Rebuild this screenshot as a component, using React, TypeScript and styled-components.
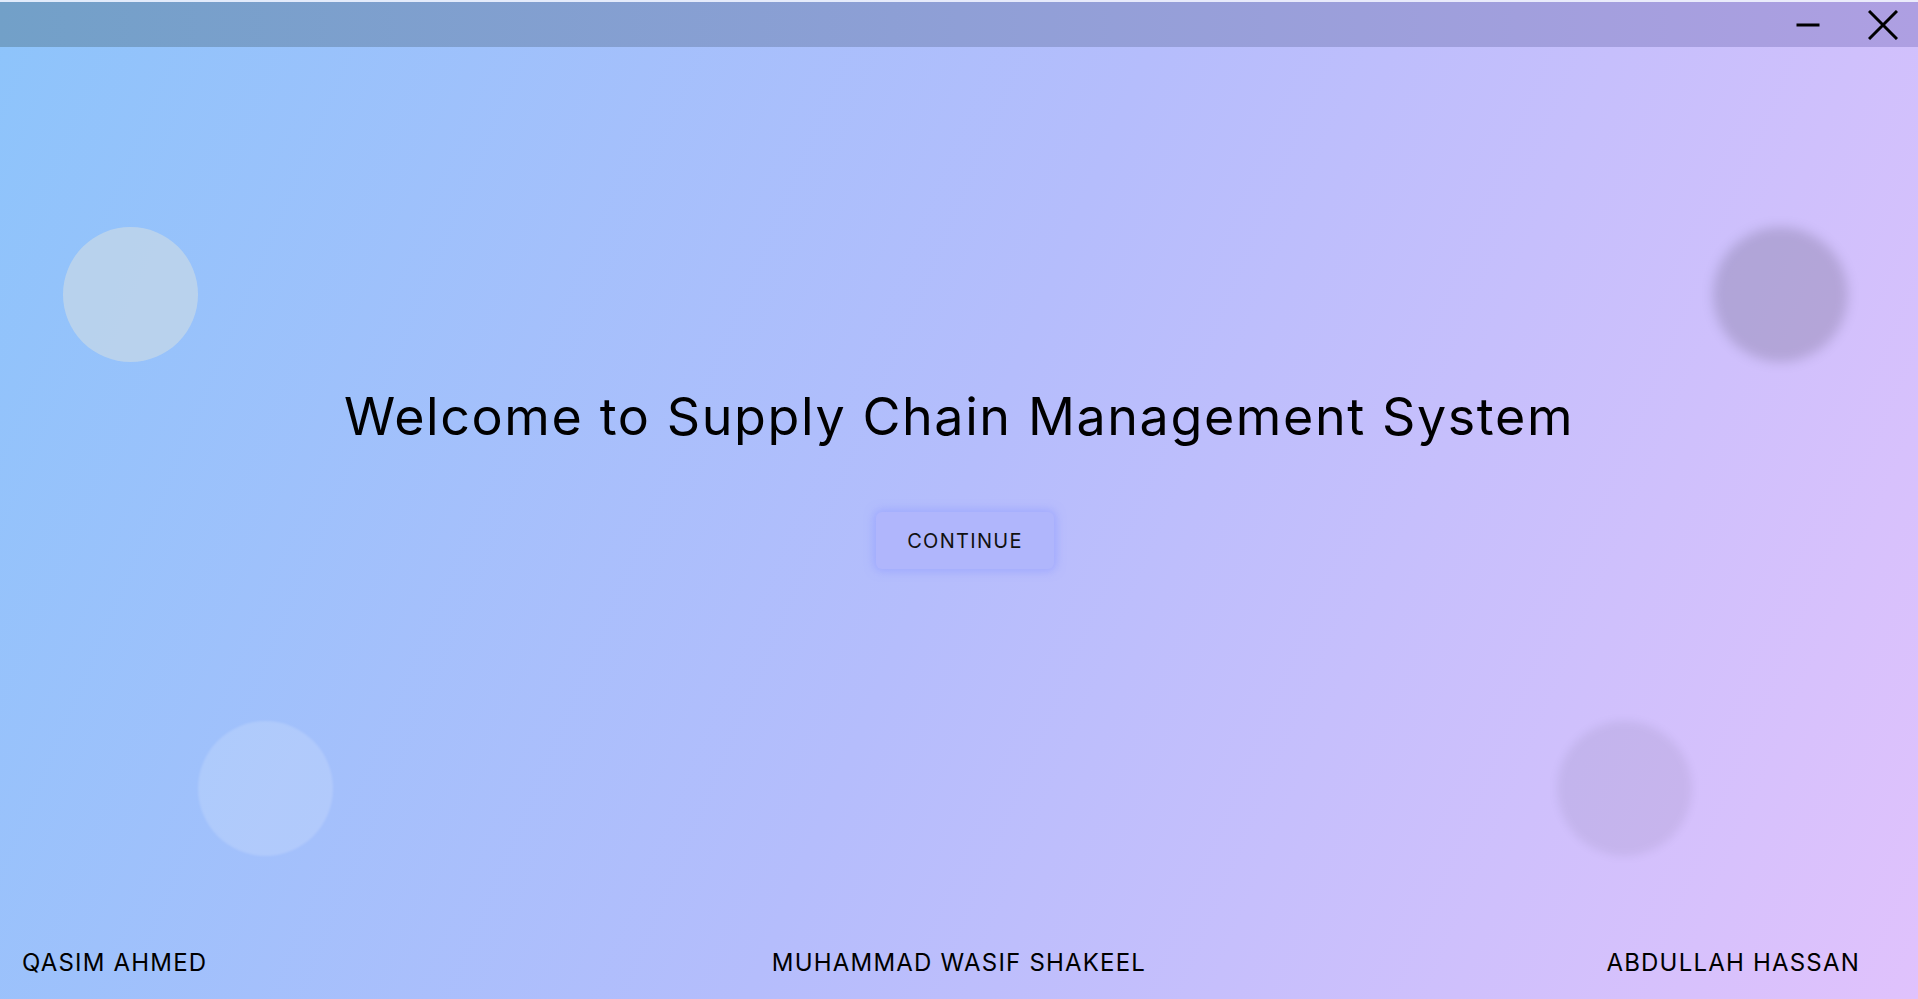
import React from "react";
import styled, { createGlobalStyle } from "styled-components";

const GlobalStyle = createGlobalStyle`
  html, body { margin: 0; padding: 0; height: 100%; }
  body { font-family: Inter, "Open Sans", sans-serif; }
  #root { height: 100%; }
`;

const Page = styled.div`
  position: relative;
  overflow: hidden;
  height: 100vh;
  display: flex;
  flex-direction: column;
  background: linear-gradient(113deg, rgb(141, 196, 251) 0%, rgb(181, 189, 252) 50%, rgb(224, 194, 252) 100%);
  font-family: Inter, "Open Sans", sans-serif;
  color: #000;
`;

const TitleBar = styled.div`
  height: 45px;
  border-top: 2px solid rgba(240, 242, 250, 0.85);
  background: linear-gradient(90deg, #72a0c8 0%, #8f9fd6 50%, #ae9fe2 100%);
  background-clip: padding-box;
  display: flex;
  justify-content: flex-end;
  align-items: center;
  padding-right: 13px;
  gap: 30px;
  position: relative;
  z-index: 2;
`;

const IconButton = styled.button`
  width: 45px;
  height: 45px;
  border: none;
  background: transparent;
  padding: 0;
  display: flex;
  align-items: center;
  justify-content: center;
  cursor: pointer;
`;

const Main = styled.main`
  flex: 1;
  display: flex;
  flex-direction: column;
  align-items: center;
  padding-top: 339px;
  position: relative;
  z-index: 1;
`;

const Title = styled.h1`
  margin: 0;
  font-size: 52px;
  font-weight: 400;
  line-height: 62px;
  letter-spacing: 1.6px;
  white-space: nowrap;
`;

const ContinueButton = styled.button`
  margin-top: 64px;
  margin-left: 12px;
  width: 178px;
  height: 57px;
  border: none;
  border-radius: 6px;
  background: #b0b6fc;
  box-shadow: 0 0 10px 2px rgba(150, 160, 255, 0.75);
  font-family: Inter, "Open Sans", sans-serif;
  font-size: 20px;
  letter-spacing: 1.3px;
  color: #111;
  cursor: pointer;
`;

const Footer = styled.footer`
  display: grid;
  grid-template-columns: 1fr auto 1fr;
  align-items: center;
  padding: 0 22px 21px 22px;
  position: relative;
  z-index: 1;
`;

const Name = styled.div<{ $align: "start" | "center" | "end" }>`
  justify-self: ${(p) => p.$align};
  margin-right: ${(p) => (p.$align === "end" ? "36px" : "0")};
  font-size: 24px;
  font-weight: 400;
  line-height: 30px;
  letter-spacing: 1.2px;
  white-space: nowrap;
`;

const Bubble = styled.div<{ $x: number; $y: number; $bg: string; $blur: number }>`
  position: absolute;
  left: ${(p) => p.$x}px;
  top: ${(p) => p.$y}px;
  width: 135px;
  height: 135px;
  border-radius: 50%;
  background: ${(p) => p.$bg};
  filter: blur(${(p) => p.$blur}px);
  z-index: 0;
`;

const MinimizeIcon = () => (
  <svg width="24" height="24" viewBox="0 0 24 24">
    <rect x="0.5" y="10.5" width="23" height="3" fill="#000" />
  </svg>
);

const CloseIcon = () => (
  <svg width="30" height="30" viewBox="0 0 30 30">
    <path d="M1 1 L29 29 M29 1 L1 29" stroke="#000" strokeWidth="3" fill="none" />
  </svg>
);

export default function App() {
  return (
    <>
      <GlobalStyle />
      <Page>
        <Bubble $x={63} $y={227} $bg="rgba(198, 216, 232, 0.72)" $blur={0} />
        <Bubble $x={1713} $y={227} $bg="rgba(0, 0, 0, 0.14)" $blur={6} />
        <Bubble $x={198} $y={721} $bg="rgba(255, 255, 255, 0.16)" $blur={1} />
        <Bubble $x={1557} $y={721} $bg="rgba(0, 0, 0, 0.06)" $blur={4} />
        <TitleBar>
          <IconButton aria-label="Minimize">
            <MinimizeIcon />
          </IconButton>
          <IconButton aria-label="Close">
            <CloseIcon />
          </IconButton>
        </TitleBar>
        <Main>
          <Title>Welcome to Supply Chain Management System</Title>
          <ContinueButton>CONTINUE</ContinueButton>
        </Main>
        <Footer>
          <Name $align="start">QASIM AHMED</Name>
          <Name $align="center">MUHAMMAD WASIF SHAKEEL</Name>
          <Name $align="end">ABDULLAH HASSAN</Name>
        </Footer>
      </Page>
    </>
  );
}
